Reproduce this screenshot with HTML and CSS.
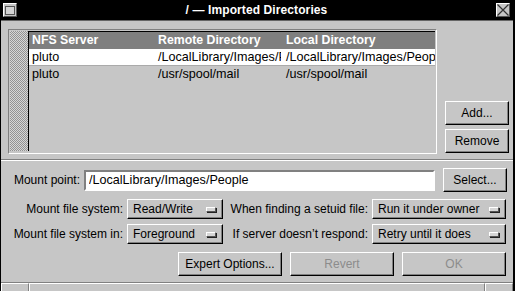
FILE: index.html
```html
<!DOCTYPE html>
<html lang="en">
<head>
  <meta charset="UTF-8">
  <title>Imported Directories</title>
  <link rel="stylesheet" href="styles.css">
</head>
<body>
  <div class="window">
    <div class="titlebar">
      <span class="tb-btn"><span class="mini-box"></span></span>
      <span class="title">/ — Imported Directories</span>
      <span class="tb-btn">
        <svg width="12" height="12" viewBox="0 0 12 12">
          <path d="M0.5 0.5 L11.5 11.5 M11.5 0.5 L0.5 11.5" stroke="#333" stroke-width="1.2" fill="none"/>
        </svg>
      </span>
    </div>

    <div class="top">
      <div class="browser">
        <div class="scroller"></div>
        <div class="table">
          <div class="row head">
            <span class="c1">NFS Server</span>
            <span class="c2">Remote Directory</span>
            <span class="c3">Local Directory</span>
          </div>
          <div class="row selected">
            <span class="c1">pluto</span>
            <span class="c2">/LocalLibrary/Images/People</span>
            <span class="c3">/LocalLibrary/Images/People</span>
          </div>
          <div class="row">
            <span class="c1">pluto</span>
            <span class="c2">/usr/spool/mail</span>
            <span class="c3">/usr/spool/mail</span>
          </div>
        </div>
      </div>
      <div class="side-buttons">
        <button class="btn">Add...</button>
        <button class="btn">Remove</button>
      </div>
    </div>

    <div class="separator"></div>

    <div class="mount-row">
      <label class="mount-label" for="mountPoint">Mount point:</label>
      <input class="field" id="mountPoint" type="text" value="/LocalLibrary/Images/People">
      <button class="btn select-btn">Select...</button>
    </div>

    <div class="options">
      <span class="opt-label">Mount file system:</span>
      <div class="popup">Read/Write<span class="knob"></span></div>
      <span class="opt-label">When finding a setuid file:</span>
      <div class="popup">Run it under owner<span class="knob"></span></div>

      <span class="opt-label">Mount file system in:</span>
      <div class="popup">Foreground<span class="knob"></span></div>
      <span class="opt-label">If server doesn’t respond:</span>
      <div class="popup">Retry until it does<span class="knob"></span></div>
    </div>

    <div class="actions">
      <button class="btn wide">Expert Options...</button>
      <button class="btn wide" disabled>Revert</button>
      <button class="btn wide" disabled>OK</button>
    </div>

    <div class="resize-bar">
      <span class="seg corner"></span>
      <span class="seg middle"></span>
      <span class="seg corner"></span>
    </div>
  </div>
</body>
</html>
```

FILE: styles.css
```css
body {
  margin: 0;
  background: #c6c6c6;
  font-family: "Liberation Sans", Arial, sans-serif;
  font-size: 12px;
  color: #000;
}

.window {
  width: 512px;
  height: 291px;
  border-left: 1px solid #000;
  border-right: 2px solid #000;
  background: #c6c6c6;
  display: flex;
  flex-direction: column;
}

/* title bar */
.titlebar {
  height: 20px;
  background: #000;
  border-bottom: 1px solid #666;
  display: flex;
  align-items: center;
  padding: 0 3px 0 2px;
}

.tb-btn {
  width: 12px;
  height: 12px;
  background: #c6c6c6;
  border: 1px solid;
  border-color: #fff #555 #555 #fff;
  display: flex;
  align-items: center;
  justify-content: center;
}

.mini-box {
  width: 8px;
  height: 7px;
  border: 1px solid #555;
  background: #d4d4d4;
}

.title {
  flex: 1;
  text-align: center;
  color: #fff;
  font-weight: bold;
  font-size: 12px;
  letter-spacing: 0.1px;
}

/* list and side buttons */
.top {
  display: flex;
  margin-top: 8px;
  padding: 0 6px 0 7px;
  gap: 8px;
}

.browser {
  width: 425px;
  height: 120px;
  border: 1px solid;
  border-color: #808080 #fff #fff #808080;
  padding: 1px 1px 2px 1px;
  display: flex;
}

.scroller {
  width: 18px;
  border-right: 1px solid #000;
  background-image: repeating-conic-gradient(#929292 0% 25%, #d6d6d6 0% 50%);
  background-size: 2px 2px;
}

.table {
  flex: 1;
  overflow: hidden;
}

.row {
  display: flex;
  height: 17px;
  line-height: 17px;
  white-space: nowrap;
  font-size: 12.6px;
}

.row span {
  overflow: hidden;
  padding-left: 3px;
}

.row .c1 { width: 123px; }
.row .c2 { width: 123px; margin-right: 2px; }
.row .c3 { flex: 1; }

.row.head {
  background: #7f7f7f;
  border-top: 1px solid #000;
  color: #fff;
  font-weight: bold;
  font-size: 12.3px;
}

.row.selected {
  background: #fff;
  border-bottom: 1px solid #aaa;
  height: 16px;
  line-height: 16px;
}

.side-buttons {
  display: flex;
  flex-direction: column;
  justify-content: flex-end;
  gap: 4px;
  padding-bottom: 1px;
}

.btn {
  width: 64px;
  height: 24px;
  padding: 0;
  background: #c6c6c6;
  border: 1px solid;
  border-color: #fff #000 #000 #fff;
  box-shadow: inset -1px -1px 0 #808080;
  font-family: "Liberation Sans", Arial, sans-serif;
  font-size: 12px;
  color: #000;
}

.btn:disabled {
  color: #8c8c8c;
}

.separator {
  margin-top: 5px;
  border-top: 1px solid #808080;
  border-bottom: 1px solid #fff;
}

/* mount point */
.mount-row {
  display: flex;
  align-items: center;
  margin-top: 7px;
  padding-left: 12px;
}

.mount-label {
  width: 67px;
  text-align: right;
  margin-right: 4px;
}

.field {
  box-sizing: border-box;
  width: 351px;
  height: 21px;
  border: 2px solid;
  border-color: #808080 #fff #fff #808080;
  background: #fff;
  padding: 0 3px;
  font-family: "Liberation Sans", Arial, sans-serif;
  font-size: 12.6px;
  margin-right: 8px;
}

/* popups */
.options {
  display: grid;
  grid-template-columns: 111px 96px 141px 134px;
  grid-auto-rows: 20px;
  column-gap: 4px;
  row-gap: 5px;
  margin-top: 7px;
  padding-left: 11px;
  align-items: center;
}

.opt-label {
  text-align: right;
  white-space: nowrap;
}

.popup {
  box-sizing: border-box;
  height: 20px;
  border: 1px solid;
  border-color: #fff #000 #000 #fff;
  box-shadow: inset -1px -1px 0 #808080;
  display: flex;
  align-items: center;
  justify-content: space-between;
  padding: 0 6px 0 5px;
}

.knob {
  width: 8px;
  height: 3px;
  background: #d6d6d6;
  border: 1px solid;
  border-color: #fff #555 #555 #fff;
  box-shadow: 1px 1px 0 #222;
}

/* bottom buttons */
.actions {
  display: flex;
  justify-content: flex-end;
  gap: 8px;
  margin-top: 8px;
  padding-right: 7px;
}

.btn.wide {
  width: 104px;
}

.resize-bar {
  margin-top: auto;
  height: 8px;
  border-top: 1px solid #808080;
  display: flex;
}

.seg {
  border-top: 1px solid #fff;
  border-left: 1px solid #fff;
  border-right: 1px solid #808080;
}

.seg.corner { width: 26px; }
.seg.middle { flex: 1; }
```
